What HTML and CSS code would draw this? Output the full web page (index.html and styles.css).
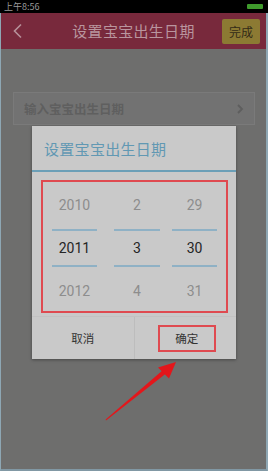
FILE: index.html
```html
<!DOCTYPE html>
<html lang="zh">
<head>
<meta charset="utf-8">
<link rel="stylesheet" href="styles.css">
</head>
<body>
<div class="screen">
  <div class="status">
    <span class="time">上午8:56</span>
    <span class="battery"></span>
  </div>
  <div class="header">
    <svg class="back" width="12" height="16" viewBox="0 0 12 16"><polyline points="9,1.5 2.5,8 9,14.5" fill="none" stroke="#b7919a" stroke-width="1.6"/></svg>
    <span class="title">设置宝宝出生日期</span>
    <span class="done">完成</span>
  </div>
  <div class="content">
    <div class="row">
      <span class="row-text">输入宝宝出生日期</span>
      <svg class="chev" width="8" height="10" viewBox="0 0 8 10"><polyline points="2,1 6,5 2,9" fill="none" stroke="#5e5e5e" stroke-width="1.8"/></svg>
    </div>
  </div>

  <div class="dialog">
    <div class="dlg-title">设置宝宝出生日期</div>
    <div class="picker-wrap">
      <div class="picker">
        <div class="col">
          <div class="item top">2010</div>
          <div class="item sel">2011</div>
          <div class="item bottom">2012</div>
        </div>
        <div class="col mid">
          <div class="item top">2</div>
          <div class="item sel">3</div>
          <div class="item bottom">4</div>
        </div>
        <div class="col">
          <div class="item top">29</div>
          <div class="item sel">30</div>
          <div class="item bottom">31</div>
        </div>
      </div>
    </div>
    <div class="buttons">
      <div class="btn">取消</div>
      <div class="btn ok"><span class="ok-box">确定</span></div>
    </div>
  </div>

  <svg class="arrow" width="268" height="471" viewBox="0 0 268 471">
    <polygon points="106,420.5 105.6,419.6 163,370 166,373.6" fill="#e3161b"/>
    <polygon points="176,362 158,367.5 169,378.5" fill="#e3161b"/>
  </svg>
</div>
</body>
</html>
```

FILE: styles.css
```css
* { box-sizing: border-box; }
html, body { margin: 0; padding: 0; }
body {
  width: 268px;
  height: 471px;
  overflow: hidden;
  background: #6e6e6d;
  font-family: "Noto Sans CJK SC", "Noto Sans", sans-serif;
}
.screen {
  position: relative;
  width: 268px;
  height: 471px;
  background: #6e6e6d;
  border-left: 1px solid #8ea7b4;
  border-right: 2px solid #8ea7b4;
  border-bottom: 2px solid #8198a4;
  display: flex;
  flex-direction: column;
}
.status {
  height: 13px;
  background: #000;
  display: flex;
  align-items: center;
  justify-content: space-between;
  padding: 0 3px 0 4px;
  margin-left: -1px;
  margin-right: -2px;
}
.time {
  color: #9a9a9a;
  font-size: 9px;
  line-height: 13px;
}
.battery {
  width: 16px;
  height: 5px;
  background: #3f9a2c;
  border-radius: 1px;
  margin-right: 2px;
}
.header {
  height: 36px;
  background: #78293c;
  display: flex;
  align-items: center;
  position: relative;
  padding: 0 6px 0 11px;
}
.back { display: block; }
.title {
  position: absolute;
  left: 0;
  right: 0;
  text-align: center;
  color: #b9959e;
  font-size: 15px;
  letter-spacing: 0.3px;
  line-height: 36px;
  pointer-events: none;
}
.done {
  margin-left: auto;
  width: 38px;
  height: 25px;
  background: #8c7a33;
  border-radius: 2px;
  color: #332b17;
  font-size: 12px;
  line-height: 25px;
  text-align: center;
}
.content {
  padding: 43px 11px 0 12px;
}
.row {
  height: 33px;
  background: #727272;
  border: 1px solid #7a7a7a;
  display: flex;
  align-items: center;
  padding: 0 10px 0 10px;
}
.row-text {
  color: #5f5f5f;
  font-size: 12.5px;
  font-weight: bold;
}
.chev { margin-left: auto; display: block; }

.dialog {
  position: absolute;
  left: 31px;
  top: 126px;
  width: 204px;
  height: 233px;
  background: #c9c9c9;
  box-shadow: 0 1px 3px rgba(0,0,0,0.35);
  display: flex;
  flex-direction: column;
}
.dlg-title {
  height: 46px;
  border-bottom: 2px solid #6b9fb7;
  color: #6198b3;
  font-size: 15px;
  line-height: 46px;
  padding-left: 12px;
  letter-spacing: 0.3px;
}
.picker-wrap {
  padding: 8px 8px 0 9px;
}
.picker {
  height: 133px;
  border: 2px solid #df4a50;
  display: flex;
  padding-left: 9px;
  font-family: Roboto, "Noto Sans", sans-serif;
}
.col {
  width: 45px;
  display: flex;
  flex-direction: column;
}
.col.mid {
  width: 46px;
  margin: 0 12px 0 17px;
}
.item {
  text-align: center;
  font-size: 14px;
}
.item.top {
  height: 47px;
  line-height: 47px;
  color: #8d8d8d;
}
.item.sel {
  height: 38px;
  line-height: 34px;
  border-top: 2px solid #8fb1c5;
  border-bottom: 2px solid #8fb1c5;
  color: #252525;
}
.item.bottom {
  height: 44px;
  line-height: 48px;
  color: #8d8d8d;
}
.buttons {
  margin-top: 3px;
  flex: 1;
  display: flex;
  border-top: 1px solid #c2c2c2;
}
.btn {
  flex: 1;
  display: flex;
  align-items: center;
  justify-content: center;
  font-size: 11.5px;
  color: #333;
}
.btn + .btn { border-left: 1px solid #bdbdbd; }
.ok-box {
  width: 58px;
  height: 27px;
  border: 2px solid #df4a50;
  display: flex;
  align-items: center;
  justify-content: center;
  margin-left: 3px;
}
.arrow {
  position: absolute;
  left: -1px;
  top: 0;
  pointer-events: none;
}
```
